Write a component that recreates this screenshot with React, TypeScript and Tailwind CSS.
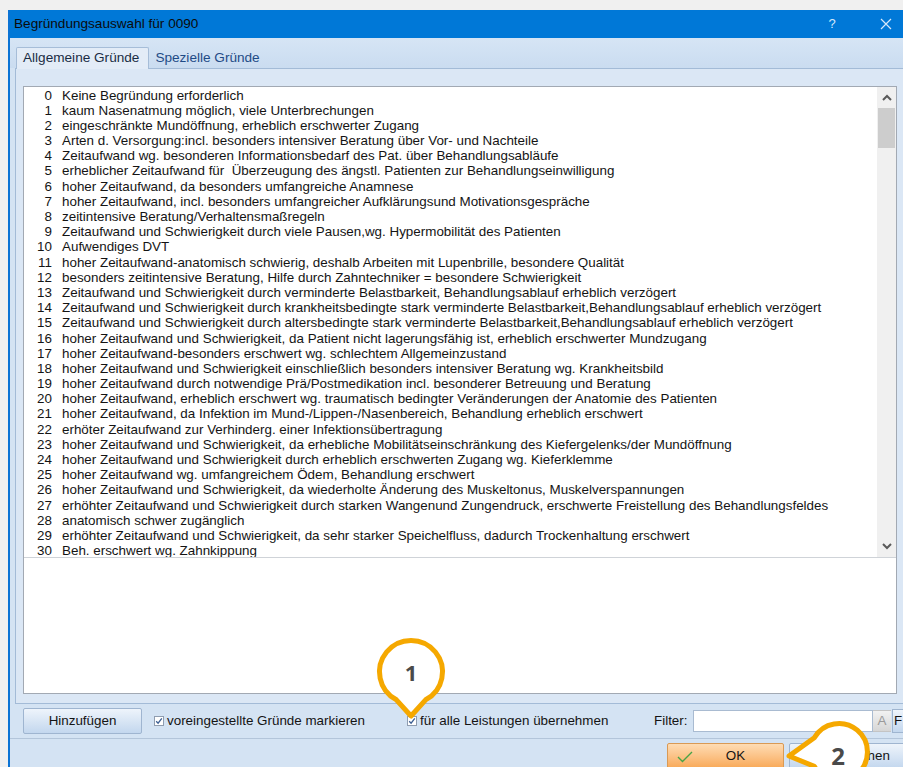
import React from "react";

const reasons: string[] = [
  "Keine Begründung erforderlich",
  "kaum Nasenatmung möglich, viele Unterbrechungen",
  "eingeschränkte Mundöffnung, erheblich erschwerter Zugang",
  "Arten d. Versorgung:incl. besonders intensiver Beratung über Vor- und Nachteile",
  "Zeitaufwand wg. besonderen Informationsbedarf des Pat. über Behandlungsabläufe",
  "erheblicher Zeitaufwand für  Überzeugung des ängstl. Patienten zur Behandlungseinwilligung",
  "hoher Zeitaufwand, da besonders umfangreiche Anamnese",
  "hoher Zeitaufwand, incl. besonders umfangreicher Aufklärungsund Motivationsgespräche",
  "zeitintensive Beratung/Verhaltensmaßregeln",
  "Zeitaufwand und Schwierigkeit durch viele Pausen,wg. Hypermobilität des Patienten",
  "Aufwendiges DVT",
  "hoher Zeitaufwand-anatomisch schwierig, deshalb Arbeiten mit Lupenbrille, besondere Qualität",
  "besonders zeitintensive Beratung, Hilfe durch Zahntechniker = besondere Schwierigkeit",
  "Zeitaufwand und Schwierigkeit durch verminderte Belastbarkeit, Behandlungsablauf erheblich verzögert",
  "Zeitaufwand und Schwierigkeit durch krankheitsbedingte stark verminderte Belastbarkeit,Behandlungsablauf erheblich verzögert",
  "Zeitaufwand und Schwierigkeit durch altersbedingte stark verminderte Belastbarkeit,Behandlungsablauf erheblich verzögert",
  "hoher Zeitaufwand und Schwierigkeit, da Patient nicht lagerungsfähig ist, erheblich erschwerter Mundzugang",
  "hoher Zeitaufwand-besonders erschwert wg. schlechtem Allgemeinzustand",
  "hoher Zeitaufwand und Schwierigkeit einschließlich besonders intensiver Beratung wg. Krankheitsbild",
  "hoher Zeitaufwand durch notwendige Prä/Postmedikation incl. besonderer Betreuung und Beratung",
  "hoher Zeitaufwand, erheblich erschwert wg. traumatisch bedingter Veränderungen der Anatomie des Patienten",
  "hoher Zeitaufwand, da Infektion im Mund-/Lippen-/Nasenbereich, Behandlung erheblich erschwert",
  "erhöter Zeitaufwand zur Verhinderg. einer Infektionsübertragung",
  "hoher Zeitaufwand und Schwierigkeit, da erhebliche Mobilitätseinschränkung des Kiefergelenks/der Mundöffnung",
  "hoher Zeitaufwand und Schwierigkeit durch erheblich erschwerten Zugang wg. Kieferklemme",
  "hoher Zeitaufwand wg. umfangreichem Ödem, Behandlung erschwert",
  "hoher Zeitaufwand und Schwierigkeit, da wiederholte Änderung des Muskeltonus, Muskelverspannungen",
  "erhöhter Zeitaufwand und Schwierigkeit durch starken Wangenund Zungendruck, erschwerte Freistellung des Behandlungsfeldes",
  "anatomisch schwer zugänglich",
  "erhöhter Zeitaufwand und Schwierigkeit, da sehr starker Speichelfluss, dadurch Trockenhaltung erschwert",
  "Beh. erschwert wg. Zahnkippung",
];

function CheckBox() {
  return (
    <span className="flex h-[10px] w-[10px] shrink-0 items-center justify-center border border-[#8f9db0] bg-white">
      <svg width="8" height="8" viewBox="0 0 8 8">
        <path d="M1.2 4.2 L3.1 6.2 L6.8 1.3" fill="none" stroke="#3c5f92" strokeWidth="1.3" />
      </svg>
    </span>
  );
}

function Chevron({ up }: { up?: boolean }) {
  return (
    <svg width="10" height="7" viewBox="0 0 10 7">
      <path
        d={up ? "M1 6 L5 2 L9 6" : "M1 1 L5 5 L9 1"}
        fill="none"
        stroke="#5a5a5a"
        strokeWidth="2"
      />
    </svg>
  );
}

export default function App() {
  return (
    <div className="relative h-[767px] w-[903px] overflow-hidden bg-[#f0f0f0] font-['Liberation_Sans',Arial,sans-serif] text-[13.4px] text-[#141414]">
      <div className="h-full pl-[8px] pt-[10px]">
        <div className="flex h-[757px] w-[895px] flex-col border-l-2 border-[#0b73d4] bg-[#d4e3f3]">
          {/* title bar */}
          <div className="flex h-[28px] shrink-0 items-center bg-[#0078d7] pl-[4px] pr-[7px]">
            <span className="text-[13.6px] text-[#0b0b0b]">Begründungsauswahl für 0090</span>
            <span className="ml-auto w-[20px] text-center text-[13px] text-[#d6e8fa]">?</span>
            <span className="w-[34px]" />
            <span className="flex w-[20px] justify-center">
              <svg width="12" height="12" viewBox="0 0 12 12">
                <path d="M1 1 L11 11 M11 1 L1 11" stroke="#d6e8fa" strokeWidth="1.2" />
              </svg>
            </span>
          </div>

          {/* tab strip */}
          <div className="flex h-[30px] shrink-0 items-end bg-gradient-to-b from-[#d6e5f5] to-[#cadcf0] pl-[6px]">
            <div className="relative z-10 mb-[-1px] flex h-[22px] items-center rounded-t-[2px] border border-b-0 border-[#a6bdd8] bg-[#e3ecf7] pl-[6px] pr-[9px] text-[13.6px] text-[#1a2c45]">
              Allgemeine Gründe
            </div>
            <div className="ml-[3px] flex h-[20px] items-center px-[3px] text-[13.6px] text-[#1f4b86]">Spezielle Gründe</div>
          </div>

          {/* tab panel */}
          <div className="ml-[5px] mr-[-12px] flex h-[636px] shrink-0 flex-col border border-[#a3bbd7] bg-[#dbe7f5] pb-[8px] pl-[7px] pt-[17px]">
            <div className="flex h-[608px] w-[874px] flex-col border border-[#a2a9b3] bg-white">
              <div className="flex h-[471px] shrink-0 border-b border-[#cfd3d8]">
                <div className="flex-1 overflow-hidden pt-[0.5px]">
                  {reasons.map((r, i) => (
                    <div key={i} className="flex h-[15.2px] items-center whitespace-pre leading-[15.2px]">
                      <span className="w-[28px] text-right">{i}</span>
                      <span className="pl-[10px]">{r}</span>
                    </div>
                  ))}
                </div>
                <div className="flex w-[19px] shrink-0 flex-col bg-[#f0f0f0]">
                  <div className="flex h-[21px] items-center justify-center">
                    <Chevron up />
                  </div>
                  <div className="mx-[1px] h-[40px] bg-[#cdcdcd]" />
                  <div className="flex-1" />
                  <div className="flex h-[21px] items-center justify-center">
                    <Chevron />
                  </div>
                </div>
              </div>
              <div className="flex-1" />
            </div>
          </div>

          {/* options row */}
          <div className="flex h-[34px] shrink-0 items-center pl-[13px]">
            <button className="h-[26px] w-[119px] shrink-0 rounded-[2px] border border-[#9fb5d0] bg-gradient-to-b from-[#eef4fb] to-[#c3d7ee] text-[#141414]">
              Hinzufügen
            </button>
            <div className="ml-[12px] flex w-[253px] shrink-0 items-center gap-[3px]">
              <CheckBox />
              <span>voreingestellte Gründe markieren</span>
            </div>
            <div className="flex w-[247px] shrink-0 items-center gap-[3px]">
              <CheckBox />
              <span>für alle Leistungen übernehmen</span>
            </div>
            <span className="w-[39px] shrink-0">Filter:</span>
            <div className="h-[22px] w-[180px] shrink-0 border border-[#a9bbd1] bg-white" />
            <div className="flex h-[22px] w-[18px] shrink-0 items-center justify-center border-y border-[#c4c4c4] bg-gradient-to-b from-[#f2f2f2] to-[#d6d6d6] text-[#9a9a9a]">
              A
            </div>
            <div className="ml-[1px] flex h-[24px] w-[30px] shrink-0 items-center border border-[#9fb5d0] bg-gradient-to-b from-[#eef4fb] to-[#c3d7ee] pl-[1px]">
              F
            </div>
          </div>

          {/* dialog buttons */}
          <div className="flex flex-1 gap-[5px] border-t border-[#b3c5da] pl-[657px] pt-[4px]">
            <button className="relative flex h-[26px] w-[117px] shrink-0 items-center justify-center rounded-[2px] border border-[#d99a55] bg-gradient-to-b from-[#fedcb3] to-[#f8a957] pl-[20px]">
              <svg className="absolute left-[9px] top-[7px]" width="16" height="12" viewBox="0 0 16 12">
                <path d="M1 6 L5.5 10.5 L15 1" fill="none" stroke="#47a447" strokeWidth="1.4" />
              </svg>
              OK
            </button>
            <button className="relative flex h-[26px] w-[117px] shrink-0 items-center justify-center rounded-[2px] border border-[#9fb5d0] bg-gradient-to-b from-[#eef4fb] to-[#c3d7ee] pl-[20px]">
              <svg className="absolute left-[9px] top-[7px]" width="12" height="12" viewBox="0 0 12 12">
                <path d="M1 1 L11 11 M11 1 L1 11" stroke="#d23a2a" strokeWidth="1.6" />
              </svg>
              Abbrechen
            </button>
          </div>
        </div>
      </div>

      {/* numbered callouts */}
      <svg className="pointer-events-none absolute left-0 top-0" width="903" height="767" viewBox="0 0 903 767">
        <path
          d="M396.4 699.8 A31.5 31.5 0 1 1 425.6 699.8 L411 716 Z"
          fill="#ffffff"
          stroke="#f5a800"
          strokeWidth="5"
          strokeLinejoin="round"
        />
        <path
          d="M814.3 737.7 A28.5 28.5 0 1 1 814.3 766.3 L789 756 Z"
          fill="#ffffff"
          stroke="#f5a800"
          strokeWidth="5"
          strokeLinejoin="round"
        />
      </svg>
      <div className="absolute left-[396px] top-[657px] w-[30px] text-center font-['Open_Sans',Arial,sans-serif] text-[22px] font-bold leading-[30px] text-[#4a4a4a]">
        1
      </div>
      <div className="absolute left-[823px] top-[740px] w-[30px] text-center font-['Open_Sans',Arial,sans-serif] text-[24px] font-bold leading-[32px] text-[#4a4a4a]">
        2
      </div>
    </div>
  );
}
